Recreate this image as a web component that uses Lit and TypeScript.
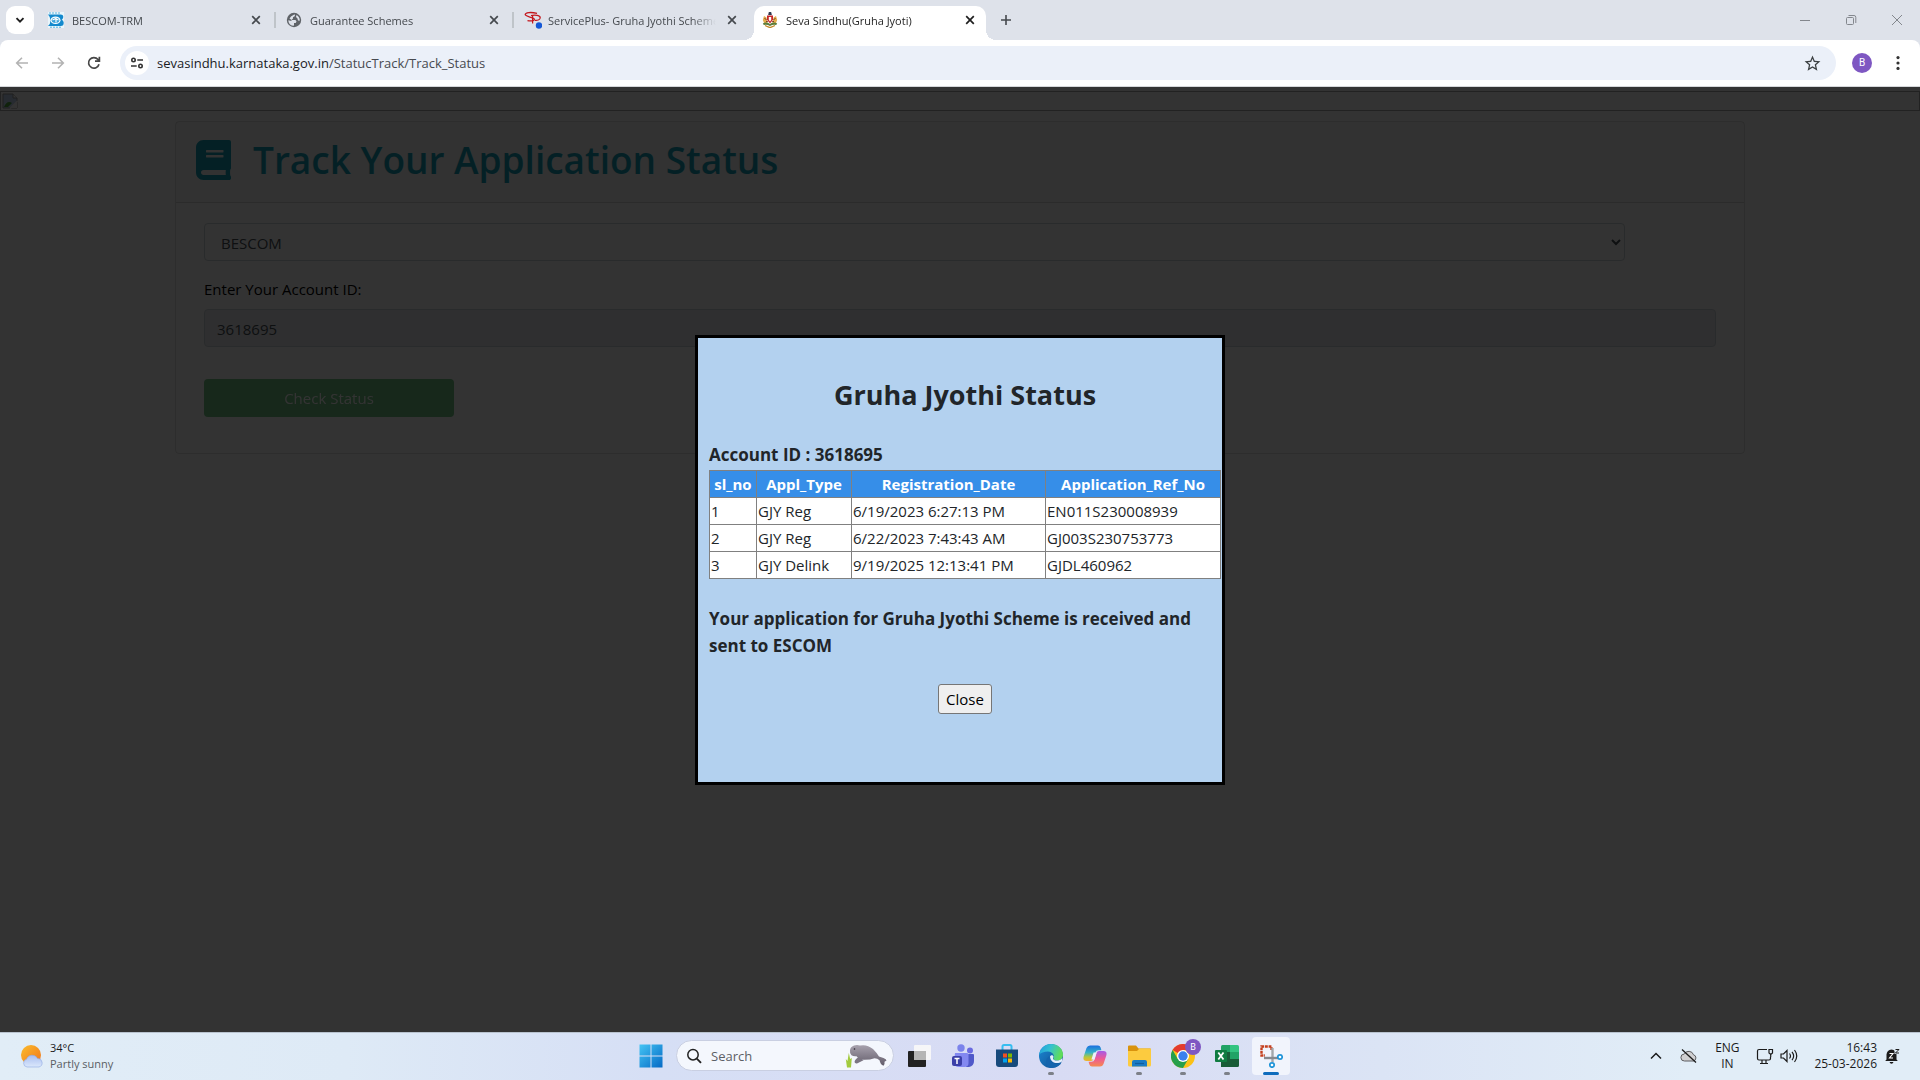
import { LitElement, html, css, svg } from "lit";
import { customElement } from "lit/decorators.js";
import { classMap } from "lit/directives/class-map.js";

const closeIcon = html`<svg viewBox="0 0 16 16" width="16" height="16"><path d="M4.2 4.2l7.6 7.6M11.8 4.2l-7.6 7.6" stroke="currentColor" stroke-width="1.7" fill="none"/></svg>`;

const bescomIcon = html`<svg viewBox="0 0 16 16" width="16" height="16">
  <rect width="16" height="16" fill="#e8f5fb"/>
  <path d="M0 2.500h12.500q3.200 0 2.700 3-.5 1.700-1.500 2.300 1.700.7 2 2.700.2 3.500-3 3.500H0q2.500-2 2.500-5.500T0 2.500z" fill="#1389cd"/>
  <path d="M1 1h12M2 15.200h11" stroke="#58b4e0" stroke-dasharray="2 1"/>
  <ellipse cx="7.500" cy="8.300" rx="5" ry="3.800" fill="#fff"/>
  <ellipse cx="7.500" cy="8.300" rx="3.800" ry="2.600" fill="#3aa4dc"/>
  <path d="M4.500 8l3.500-1.500v4M8 7l2.500 1" stroke="#fff" stroke-width="1.200" fill="none"/>
</svg>`;

const globeIcon = html`<svg viewBox="0 0 16 16" width="16" height="16">
  <circle cx="8" cy="8" r="7.200" fill="#5f6368"/>
  <path d="M8.600 2.300L9 4 7 5.200v1.300L5.500 8h4l1 1.500-.8 1.500H8v2.500l-1 .3C4.200 13.300 2.300 11 2.300 8.200l3.200.8V8L3.500 6.500 5 4.500z M10.500 2.900L10 5l1.500 1.500.5 2 1.700.2c.3-2.500-1-4.700-3.200-5.800z" fill="#dee2ea"/>
</svg>`;

const servicePlusIcon = html`<svg viewBox="0 0 18 18" width="18" height="18">
  <path d="M13 2.300C7 .9 1.200 1.300 1.200 3.600c0 2.300 9 2.500 9.200 4.700.1 1.600-3.400 2-6.900 1.400" fill="none" stroke="#c4161c" stroke-width="1.300"/>
  <path d="M7 4.600c4-.9 9.600-.3 9.200 2.400-.3 2-3.200 2.600-5.200 2.300M8.600 5v7.600" fill="none" stroke="#c4161c" stroke-width="1.200"/>
  <circle cx="15" cy="14.500" r="3.200" fill="#1558d6"/>
</svg>`;

const emblemIcon = html`<svg viewBox="0 0 16 16" width="16" height="16">
  <path d="M6.800 0h2.400l.6 3H6.200z" fill="#30384f"/>
  <path d="M2 4l2.500 1.500L5.500 11H2L.8 8z M14 4l-2.500 1.500L10.500 11H14l1.200-3z" fill="#e3ad4c"/>
  <path d="M5 3.500h6v4.200L8 11.500 5 7.700z" fill="#c62828"/>
  <path d="M6.800 5h2.400v3L8 9.500 6.800 8z" fill="#fff"/>
  <path d="M.8 11.500q3.500-2 7.200.5 3.700-2.500 7.200-.5l-1 1.600q-3-1-6.200 1-3.200-2-6.200-1z" fill="#5c7d3a"/>
  <path d="M3 13.500l5 2.200 5-2.200" stroke="#c48a2a" stroke-width="1.300" fill="none"/>
  <path d="M2.500 6.500l2 1M13.500 6.500l-2 1M4 9.500h1.800M10.200 9.500H12" stroke="#7a3b22"/>
</svg>`;

interface Tab {
  title: string;
  icon: unknown;
  active?: boolean;
}

const tabs: Tab[] = [
  { title: "BESCOM-TRM", icon: bescomIcon },
  { title: "Guarantee Schemes", icon: globeIcon },
  { title: "ServicePlus- Gruha Jyothi Scheme", icon: servicePlusIcon },
  { title: "Seva Sindhu(Gruha Jyoti)", icon: emblemIcon, active: true },
];

@customElement("browser-chrome")
export class BrowserChrome extends LitElement {
  static styles = css`
    :host {
      display: block;
      background: #dee2ea;
      color: #45494e;
      font-size: 11px;
    }
    button {
      font: inherit;
      color: inherit;
      background: none;
      border: 0;
      padding: 0;
      display: flex;
      align-items: center;
      justify-content: center;
    }
    svg { display: block; flex: none; }
    .strip {
      display: flex;
      align-items: center;
      height: 40px;
    }
    .search-tabs {
      width: 28px;
      height: 28px;
      margin: 0 6px;
      border-radius: 9px;
      background: #fff;
      color: #1f1f1f;
    }
    .tab {
      position: relative;
      display: flex;
      align-items: center;
      box-sizing: border-box;
      width: 232px;
      height: 34px;
      margin: 6px 6px 0 0;
      padding: 0 8px 6px;
      gap: 8px;
    }
    .tab .icon { width: 16px; }
    .tab .title {
      flex: 1;
      min-width: 0;
      justify-content: flex-start;
      overflow: hidden;
      white-space: nowrap;
      mask-image: linear-gradient(90deg, #000 calc(100% - 24px), transparent);
    }
    .tab.divided::after {
      content: "";
      position: absolute;
      right: -4px;
      top: 6px;
      width: 2px;
      height: 16px;
      background: #bfc4c9;
    }
    .tab.active {
      background: #fff;
      color: #1f1f1f;
      border-radius: 10px 10px 0 0;
    }
    .tab.active::before,
    .tab.active::after {
      content: "";
      position: absolute;
      bottom: 0;
      width: 10px;
      height: 10px;
    }
    .tab.active::before {
      left: -10px;
      background: radial-gradient(circle at 0 0, transparent 10px, #fff 10px);
    }
    .tab.active::after {
      right: -10px;
      background: radial-gradient(circle at 100% 0, transparent 10px, #fff 10px);
    }
    .new-tab { width: 28px; height: 28px; }
    .window {
      display: flex;
      margin-left: auto;
      color: #83878d;
    }
    .window button { width: 46px; height: 40px; }
    .toolbar {
      display: flex;
      align-items: center;
      height: 46px;
      padding: 0 2px 0 4px;
      background: #fff;
      border-radius: 8px 8px 0 0;
      border-bottom: 1px solid #d5d7da;
    }
    .nav { width: 36px; height: 34px; color: #474747; }
    .nav:disabled { color: #b3b3b3; }
    .address {
      flex: 1;
      display: flex;
      align-items: center;
      height: 34px;
      margin: 0 10px 0 8px;
      padding: 0 14px 0 5px;
      border-radius: 17px;
      background: #ebf0f9;
    }
    .site {
      width: 24px;
      height: 24px;
      border-radius: 50%;
      background: #fff;
      color: #333;
    }
    .url {
      flex: 1;
      margin-left: 8px;
      font-size: 13px;
      color: #474a50;
    }
    .url span { color: #1a1b1e; }
    .profile { width: 32px; height: 32px; }
    .avatar {
      width: 20px;
      height: 20px;
      border-radius: 50%;
      background: #7e57c2;
      color: #fff;
      font: 10px/20px Roboto, sans-serif;
      text-align: center;
    }
    .menu { width: 40px; height: 32px; color: #333; }
  `;

  private tab(t: Tab, i: number) {
    const divided = !t.active && !tabs[i + 1]?.active;
    return html`<div class=${classMap({ tab: true, active: !!t.active, divided })}>
      <span class="icon">${t.icon}</span>
      <button class="title">${t.title}</button>
      <button aria-label="Close tab">${closeIcon}</button>
    </div>`;
  }

  render() {
    return html`
      <div class="strip">
        <button class="search-tabs" aria-label="Search tabs">
          <svg viewBox="0 0 16 16" width="16" height="16"><path d="M4.500 6.200L8 9.700l3.500-3.500" fill="none" stroke="currentColor" stroke-width="1.900"/></svg>
        </button>
        ${tabs.map((t, i) => this.tab(t, i))}
        <button class="new-tab" aria-label="New tab">
          <svg viewBox="0 0 16 16" width="16" height="16"><path d="M8 3v10M3 8h10" stroke="currentColor" stroke-width="1.600"/></svg>
        </button>
        <div class="window">
          <button aria-label="Minimise"><svg viewBox="0 0 12 12" width="12" height="12"><path d="M1 6.500h10" stroke="currentColor"/></svg></button>
          <button aria-label="Restore"><svg viewBox="0 0 12 12" width="12" height="12"><rect x="1.500" y="3.500" width="7" height="7" rx="1" fill="none" stroke="currentColor"/><path d="M3.500 1.500h5.500a1.800 1.800 0 0 1 1.800 1.800V9" fill="none" stroke="currentColor"/></svg></button>
          <button aria-label="Close"><svg viewBox="0 0 12 12" width="12" height="12"><path d="M1 1l10 10M11 1L1 11" stroke="currentColor"/></svg></button>
        </div>
      </div>
      <div class="toolbar">
        <button class="nav" disabled aria-label="Back"><svg viewBox="0 0 16 16" width="16" height="16"><path d="M14 8H3M8 2.700L2.700 8 8 13.300" fill="none" stroke="currentColor" stroke-width="1.600"/></svg></button>
        <button class="nav" disabled aria-label="Forward"><svg viewBox="0 0 16 16" width="16" height="16"><path d="M2 8h11M8 2.700L13.300 8 8 13.300" fill="none" stroke="currentColor" stroke-width="1.600"/></svg></button>
        <button class="nav" aria-label="Reload"><svg viewBox="0 0 16 16" width="16" height="16"><path d="M13 9.200A5.300 5.300 0 1 1 12 4.500l1 1.200M13.400 1.800v4.400H9" fill="none" stroke="currentColor" stroke-width="1.700"/></svg></button>
        <div class="address">
          <button class="site" aria-label="Site information"><svg viewBox="0 0 16 16" width="16" height="16"><g fill="none" stroke="currentColor" stroke-width="1.600"><circle cx="4.500" cy="5" r="1.700"/><path d="M8.300 5H14M2 11h5.700"/><circle cx="11.500" cy="11" r="1.700"/></g></svg></button>
          <div class="url"><span>sevasindhu.karnataka.gov.in</span>/StatucTrack/Track_Status</div>
          <button class="star" aria-label="Bookmark this tab"><svg viewBox="0 0 24 24" width="19" height="19" fill="#3c4043"><path d="M22 9.240l-7.190-.62L12 2 9.190 8.630 2 9.240l5.460 4.730L5.820 21 12 17.270 18.180 21l-1.630-7.030L22 9.240zM12 15.400l-3.760 2.270 1-4.280-3.320-2.880 4.380-.38L12 6.100l1.710 4.040 4.380.38-3.320 2.880 1 4.280L12 15.400z"/></svg></button>
        </div>
        <button class="profile" aria-label="Profile"><span class="avatar">B</span></button>
        <button class="menu" aria-label="Menu"><svg viewBox="0 0 16 16" width="16" height="16" fill="currentColor"><circle cx="8" cy="2.600" r="1.600"/><circle cx="8" cy="8" r="1.600"/><circle cx="8" cy="13.400" r="1.600"/></svg></button>
      </div>
    `;
  }
}

const applications = [
  ["1", "GJY Reg", "6/19/2023 6:27:13 PM", "EN011S230008939"],
  ["2", "GJY Reg", "6/22/2023 7:43:43 AM", "GJ003S230753773"],
  ["3", "GJY Delink", "9/19/2025 12:13:41 PM", "GJDL460962"],
];

@customElement("status-page")
export class StatusPage extends LitElement {
  static styles = css`
    :host {
      display: block;
      position: relative;
      overflow: hidden;
      background: #fff;
      color: #212529;
      font-size: 15px;
      line-height: 24px;
    }
    .banner {
      box-sizing: border-box;
      height: 20px;
      margin-top: 4px;
      padding: 1px;
      border: 1px solid #a9a9a9;
    }
    .banner svg { display: block; }
    .card {
      box-sizing: border-box;
      width: calc(100% * 10 / 12 - 30px);
      margin: 10px auto 0;
      border: 1px solid rgba(0, 0, 0, 0.125);
      border-radius: 4px;
    }
    .head {
      display: flex;
      align-items: center;
      gap: 22px;
      padding: 14px 20px 18px;
      background: rgba(0, 0, 0, 0.03);
      border-bottom: 1px solid rgba(0, 0, 0, 0.125);
      color: #17a2b8;
    }
    .head h1 {
      margin: 0;
      font-size: 37px;
      line-height: 48px;
      font-weight: 600;
    }
    .body { padding: 20px 28px 36px; }
    select,
    input {
      display: block;
      box-sizing: border-box;
      width: 100%;
      height: 38px;
      padding: 7px 12px 5px;
      border: 1px solid #ced4da;
      border-radius: 4px;
      background: #fff;
      color: #495057;
      font: inherit;
    }
    select { width: 94%; }
    input:disabled { background: #e9ecef; }
    label { display: block; margin: 16px 0 8px; color: #000; }
    .check {
      display: block;
      width: 250px;
      height: 38px;
      margin-top: 32px;
      border: 0;
      border-radius: 4px;
      background: #28a745;
      color: #fff;
      font: inherit;
      opacity: 0.65;
    }
    .overlay {
      position: absolute;
      inset: 0;
      display: flex;
      align-items: center;
      justify-content: center;
      background: rgba(0, 0, 0, 0.8);
    }
    .modal {
      box-sizing: border-box;
      width: 530px;
      min-height: 450px;
      padding: 40px 1px 40px 11px;
      border: 3px solid #000;
      background: #b3d1ef;
    }
    h2 {
      margin: 0;
      text-align: center;
      font-size: 27px;
      line-height: 34px;
      font-weight: 700;
    }
    .strong {
      margin: 0;
      font-size: 17px;
      line-height: 27px;
      font-weight: 700;
    }
    .account { margin-top: 29px; padding-bottom: 2px; }
    table {
      width: 100%;
      table-layout: fixed;
      border-collapse: collapse;
      background: #fff;
    }
    th,
    td {
      box-sizing: border-box;
      height: 27px;
      padding: 1px;
      border: 1px solid #808080;
      text-align: left;
      white-space: nowrap;
    }
    th {
      background: #368ee8;
      color: #fff;
      font-weight: 700;
      text-align: center;
    }
    .c1 { width: 47px; }
    .c2 { width: 95px; }
    .c3 { width: 194px; }
    .message { margin-top: 26px; }
    .close {
      display: block;
      height: 30px;
      margin: 25px auto 0;
      padding: 1px 7px;
      border: 1px solid #767676;
      border-radius: 3px;
      background: #efefef;
      color: #000;
      font: inherit;
    }
  `;

  render() {
    return html`
      <div class="banner">
        <svg viewBox="0 0 16 16" width="16" height="16"><path d="M1 1h10l4 4v10H1z" fill="#c4d8f5" stroke="#9a9a9a"/><path d="M11 1v4h4" fill="#fff" stroke="#9a9a9a"/><path d="M2 14q3-7 8-4l-4 4z" fill="#4fa83d"/><path d="M9 15l6-6v6z" fill="#fff"/><path d="M8 15.500L15.500 8" stroke="#fff" stroke-width="1.500"/></svg>
      </div>
      <main class="card">
        <div class="head">
          <svg viewBox="0 0 448 512" width="35" height="40" fill="currentColor"><path d="M448 360V24c0-13.300-10.700-24-24-24H96C43 0 0 43 0 96v320c0 53 43 96 96 96h328c13.300 0 24-10.700 24-24v-16c0-7.500-3.500-14.300-8.900-18.700-4.200-15.400-4.200-59.300 0-74.700 5.400-4.300 8.900-11.100 8.900-18.600zM128 134c0-3.300 2.700-6 6-6h212c3.300 0 6 2.700 6 6v20c0 3.300-2.700 6-6 6H134c-3.300 0-6-2.700-6-6v-20zm0 64c0-3.300 2.700-6 6-6h212c3.300 0 6 2.700 6 6v20c0 3.300-2.700 6-6 6H134c-3.300 0-6-2.700-6-6v-20zm253.400 250H96c-17.700 0-32-14.300-32-32 0-17.600 14.400-32 32-32h285.400c-1.900 17.100-1.900 46.900 0 64z"/></svg>
          <h1>Track Your Application Status</h1>
        </div>
        <div class="body">
          <select aria-label="Company"><option>BESCOM</option></select>
          <label for="account">Enter Your Account ID:</label>
          <input id="account" value="3618695" disabled />
          <button class="check" disabled>Check Status</button>
        </div>
      </main>
      <div class="overlay">
        <section class="modal" role="dialog" aria-labelledby="title">
          <h2 id="title">Gruha Jyothi Status</h2>
          <p class="strong account">Account ID : 3618695</p>
          <table>
            <thead>
              <tr>
                <th class="c1">sl_no</th>
                <th class="c2">Appl_Type</th>
                <th class="c3">Registration_Date</th>
                <th>Application_Ref_No</th>
              </tr>
            </thead>
            <tbody>
              ${applications.map((row) => html`<tr>${row.map((cell) => html`<td>${cell}</td>`)}</tr>`)}
            </tbody>
          </table>
          <p class="strong message">Your application for Gruha Jyothi Scheme is received and sent to ESCOM</p>
          <button class="close">Close</button>
        </section>
      </div>
    `;
  }
}

interface App {
  name: string;
  icon: unknown;
  running?: boolean;
  active?: boolean;
  badge?: string;
}

const glyph = (body: unknown) => html`<svg viewBox="0 0 24 24" width="24" height="24">${body}</svg>`;

const apps: App[] = [
  {
    name: "Task view",
    icon: glyph(svg`<rect x="7" y="1" width="17" height="15" rx="1" fill="#f6f6f8"/><rect x="1" y="7" width="18" height="16" rx="1" fill="#222"/><path d="M7 7h12v9H7z" fill="#b5b5b5"/>`),
  },
  {
    name: "Teams",
    icon: glyph(svg`<circle cx="19" cy="6.500" r="3" fill="#6a6ae0"/><circle cx="10" cy="4" r="3.700" fill="#7b83eb"/><path d="M15 10h7q1 0 1 1v6q0 5-5 6h-3z" fill="#5059c9"/><path d="M4 9h12q1.500 0 1.500 1.500V19q0 4-4 4H8q-5 0-5-5z" fill="#8388f0"/><rect x="1" y="12" width="10" height="10" rx="2" fill="#3b3fa8"/><path d="M3.500 14.500h5M6 14.500V20" stroke="#fff" stroke-width="1.500"/>`),
  },
  {
    name: "Microsoft Store",
    icon: glyph(svg`<path d="M7.500 6V2.500q0-1.500 1.500-1.500h6q1.500 0 1.500 1.500V6" fill="none" stroke="#37bdf0" stroke-width="2"/><path d="M1 5.500h22V20q0 3-3 3H4q-3 0-3-3z" fill="#174a7c"/><path d="M8 9.500h4v4H8z" fill="#f25022"/><path d="M13 9.500h4v4h-4z" fill="#7fba00"/><path d="M8 14.500h4v4H8z" fill="#00a4ef"/><path d="M13 14.500h4v4h-4z" fill="#ffb900"/>`),
  },
  {
    name: "Edge",
    running: true,
    icon: glyph(svg`<defs><linearGradient id="ea" x1="0" y1="0" x2="1" y2=".3"><stop offset="0" stop-color="#1f9be0"/><stop offset=".5" stop-color="#35c1d0"/><stop offset="1" stop-color="#5fdc5a"/></linearGradient><linearGradient id="eb" x1="0" y1="0" x2="1" y2="1"><stop offset="0" stop-color="#1b8ad6"/><stop offset="1" stop-color="#114a8b"/></linearGradient></defs><circle cx="12" cy="12" r="12" fill="url(#eb)"/><path d="M0 11C1 4.500 6 0 12 0c7 0 12 5 12 10.500 0 4-3 6-6 6-2.500 0-4.200-1-3.500-2.200C16 11.500 13.500 7.500 9 7.500 5 7.500 1.500 9 0 11z" fill="url(#ea)"/><path d="M10.500 12c-1 4.500 3 8 7.500 7.500 2-.2 3.500-1 4.500-1.500l-1 2.200C19 23 15 24 12 24c-5-.5-7.500-8-1.500-12z" fill="#1464ad"/><path d="M11 12.500c1-2 3.500-1.500 3.500.3 0 1-1 1.500-.2 2.500 1.500 2 6.500 1.700 9-1.300l-.4 3.500c-4 3-11.500 2-11.900-5z" fill="#e4eefb"/>`),
  },
  {
    name: "Copilot",
    icon: glyph(svg`<defs><linearGradient id="ca" x1="0" y1="0" x2="0" y2="1"><stop offset="0" stop-color="#1b6fe0"/><stop offset=".45" stop-color="#35b2c8"/><stop offset=".75" stop-color="#b6c83c"/><stop offset="1" stop-color="#f5b02e"/></linearGradient><linearGradient id="cb" x1="0" y1="0" x2="0" y2="1"><stop offset="0" stop-color="#a65ae8"/><stop offset=".5" stop-color="#ee5a94"/><stop offset="1" stop-color="#f58a4f"/></linearGradient></defs><path d="M7 1.500h8q2 0 2.600 2l.8 2.800h-3q-2.300 0-3 2.300l-2 6.500Q9.700 17 8 17H3.500Q-.5 17 .7 12.500L3.500 4Q4.500 1.500 7 1.500z" fill="url(#ca)"/><path d="M17 22.500H9q-2 0-2.600-2l-.8-2.800h3q2.300 0 3-2.300l2-6.500Q14.300 7 16 7h4.500q4 0 2.800 4.500L20.500 20q-1 2.500-3.500 2.500z" fill="url(#cb)"/><path d="M10.600 8.500h3l-2.200 7h-3z" fill="#eef0fb"/>`),
  },
  {
    name: "File Explorer",
    running: true,
    icon: glyph(svg`<path d="M1 2.500q0-1 1-1h7l2.500 3H23q1 0 1 1V10H1z" fill="#d9930d"/><path d="M1 7h9l2.500-2.500H23q1 0 1 1V21q0 1.500-1.500 1.500h-20Q1 22.500 1 21z" fill="#fccb3f"/><path d="M5 22.500V18q0-2 2-2h11q2 0 2 2v4.500z" fill="#1a7bc4"/><path d="M8 19.500h9" stroke="#0f5d9e" stroke-width="1.200"/>`),
  },
  {
    name: "Chrome",
    running: true,
    badge: "B",
    icon: glyph(svg`<circle cx="12" cy="12" r="12" fill="#fbc116"/><path d="M12 12L1.600 6A12 12 0 0 1 22.400 6H12z" fill="#e33b2e"/><path d="M1.600 6A12 12 0 0 0 12 24l5.200-9L12 12 6.800 15z" fill="#269f4b"/><circle cx="12" cy="12" r="6" fill="#fff"/><circle cx="12" cy="12" r="4.700" fill="#3a80ee"/>`),
  },
  {
    name: "Excel",
    running: true,
    icon: glyph(svg`<path d="M6 2.500Q6 1 7.500 1H15v22H7.500Q6 23 6 21.500z" fill="#21a366"/><path d="M15 1h7.500Q24 1 24 2.500V8h-9z" fill="#33c481"/><path d="M6 8h9v7H6zM15 15h9v6.500q0 1.500-1.500 1.500H6v-8z" fill="#185c37"/><path d="M15 8h9v7h-9z" fill="#21a366"/><rect y="6" width="12" height="12" rx="1" fill="#107c41"/><path d="M3.300 8.500l5.200 7M8.500 8.500l-5.200 7" stroke="#fff" stroke-width="1.800"/>`),
  },
  {
    name: "Snipping Tool",
    active: true,
    icon: glyph(svg`<path d="M12.500 6V2.500H2.500v9H6" fill="none" stroke="#c43e1c" stroke-width="2.400" stroke-dasharray="2.800 .8"/><path d="M13.500 4v14" stroke="#a2a6ab" stroke-width="2.400"/><path d="M5 14h14.500" stroke="#85898f" stroke-width="2.400"/><circle cx="21" cy="13" r="2.200" fill="#fff" stroke="#1d93d8" stroke-width="1.700"/><circle cx="13" cy="21" r="2.200" fill="#fff" stroke="#1d93d8" stroke-width="1.700"/>`),
  },
];

@customElement("task-bar")
export class TaskBar extends LitElement {
  static styles = css`
    :host {
      display: grid;
      grid-template-columns: 1fr auto 1fr;
      align-items: center;
      box-sizing: border-box;
      height: 48px;
      padding-bottom: 2px;
      border-top: 1px solid #b9c3cf;
      background: linear-gradient(90deg, #e1edf7 0, #deeaf6 18%, #d6dff5 34%, #d8dbf4 55%, #dbe4f5 72%, #e1edf7 88%);
      color: #1b1b1b;
      font-size: 11px;
      line-height: 16px;
    }
    svg { display: block; flex: none; }
    button {
      display: flex;
      align-items: center;
      justify-content: center;
      padding: 0;
      border: 0;
      background: none;
      color: inherit;
      font: inherit;
    }
    .weather {
      justify-self: start;
      gap: 6px;
      margin-left: 20px;
      text-align: left;
    }
    .weather span { display: block; }
    .weather .sky { color: #5a5e64; }
    .apps { display: flex; align-items: center; padding-left: 2px; }
    .start { width: 44px; height: 38px; }
    .search {
      display: flex;
      align-items: center;
      box-sizing: border-box;
      width: 218px;
      height: 31px;
      margin: 0 3px;
      padding: 0 6px 0 9px;
      gap: 9px;
      border: 1px solid #c9cfe2;
      border-radius: 16px;
      background: #f4f7fd;
    }
    .search input {
      flex: 1;
      min-width: 0;
      padding: 0;
      border: 0;
      outline: 0;
      background: none;
      font: inherit;
      font-size: 13px;
    }
    .search input::placeholder { color: #5c5f66; }
    .app {
      position: relative;
      width: 38px;
      height: 38px;
      margin: 0 3px;
      border-radius: 4px;
    }
    .app.active { background: #f1f4fc; }
    .app.running::after,
    .app.active::after {
      content: "";
      position: absolute;
      bottom: 0;
      width: 6px;
      height: 3px;
      border-radius: 2px;
      background: #7d8088;
    }
    .app.active::after { width: 16px; background: #0f6cbd; }
    .badge {
      position: absolute;
      top: 2px;
      right: 1px;
      width: 16px;
      height: 16px;
      border-radius: 50%;
      background: #7e57c2;
      color: #fff;
      font: 9px/16px Roboto, sans-serif;
    }
    .tray {
      display: flex;
      align-items: center;
      justify-self: end;
      padding-right: 20px;
      font-size: 12px;
    }
    .lang { width: 26px; margin: 0 16px; }
    .devices { gap: 6px; }
    .clock {
      margin: 0 7px 0 16px;
      text-align: right;
    }
    .clock span { display: block; }
    .hide { margin-right: 16px; }
  `;

  render() {
    return html`
      <button class="weather">
        <svg viewBox="0 0 24 24" width="24" height="24"><defs><linearGradient id="sun" x1="0" y1="0" x2="1" y2="1"><stop offset="0" stop-color="#fbbd2b"/><stop offset="1" stop-color="#f0731d"/></linearGradient><linearGradient id="cl" x1="0" y1="0" x2="0" y2="1"><stop offset="0" stop-color="#a8bdf0"/><stop offset="1" stop-color="#dbe8fb"/></linearGradient></defs><circle cx="11" cy="11" r="10" fill="url(#sun)"/><path d="M7 23a4 4 0 0 1-.5-7.800 6 6 0 0 1 11-.8A4.400 4.400 0 0 1 19 23z" fill="url(#cl)" stroke="#8ea8e2" stroke-width=".6"/></svg>
        <span><span>34°C</span><span class="sky">Partly sunny</span></span>
      </button>
      <div class="apps">
        <button class="start" aria-label="Start">
          <svg viewBox="0 0 24 24" width="24" height="24"><defs><linearGradient id="win" gradientUnits="userSpaceOnUse" x1="0" y1="0" x2="24" y2="24"><stop offset="0" stop-color="#45c6f5"/><stop offset="1" stop-color="#0468c4"/></linearGradient></defs><path d="M.5 .5h11v11H.5zM12.500 .5h11v11h-11zM.5 12.500h11v11H.5zM12.500 12.500h11v11h-11z" fill="url(#win)"/></svg>
        </button>
        <label class="search">
          <svg viewBox="0 0 16 16" width="16" height="16"><circle cx="7" cy="6.700" r="5.200" fill="none" stroke="#222" stroke-width="1.500"/><path d="M10.800 10.600L15 14.800" stroke="#222" stroke-width="1.900"/></svg>
          <input placeholder="Search" aria-label="Search" />
          <svg viewBox="0 0 42 24" width="42" height="24"><defs><linearGradient id="mt" x1="0" y1="0" x2="0" y2="1"><stop offset="0" stop-color="#a8a2ae"/><stop offset="1" stop-color="#625c6a"/></linearGradient></defs><path d="M2 23.500L.8 15l1.700 2L3.800 9l1.400 6 1.600-1-.8 9.500z" fill="#a2cb3f"/><path d="M14 13q-4 2-4.500 5 .5 2 3 1.300l6-3z" fill="#7b7583"/><path d="M5 6.500Q5 3 9 1.500q3-1 6 0 7-1.500 13 3.500 4 4 6 7.500l4.500 1.500q3 1 3 2.500l-2 1.200q.5 3-1 4-3-1-4-5.500-2-2-5-2-4 1.500-10 1.500-5 .5-8-3.500-3 .5-5-1-2-1.500-1.500-4.700z" fill="url(#mt)"/><circle cx="9.500" cy="5" r=".8" fill="#2b2730"/></svg>
        </label>
        ${apps.map(
          (a) => html`<button aria-label=${a.name} class=${classMap({ app: true, running: !!a.running, active: !!a.active })}>
            ${a.icon}${a.badge ? html`<span class="badge">${a.badge}</span>` : ""}
          </button>`,
        )}
      </div>
      <div class="tray">
        <button class="hide" aria-label="Show hidden icons"><svg viewBox="0 0 16 16" width="16" height="16"><path d="M3 10.500l5-5 5 5" fill="none" stroke="currentColor" stroke-width="1.500"/></svg></button>
        <button aria-label="OneDrive"><svg viewBox="0 0 18 16" width="18" height="16"><path d="M4.500 13A3.500 3.500 0 0 1 4.300 6a5 5 0 0 1 9.200.8A3.200 3.200 0 0 1 13.500 13z" fill="#d0d0d2" stroke="#5d5d60"/><path d="M2 1.500l14 13" stroke="#1b1b1b" stroke-width="1.300"/></svg></button>
        <button class="lang">ENG<br />IN</button>
        <button class="devices" aria-label="Network and volume">
          <svg viewBox="0 0 18 18" width="18" height="18"><path d="M11 2.500H3q-1.500 0-1.500 1.500v7.500q0 1.500 1.500 1.500h10q1.500 0 1.500-1.500V10M6 13v3.500M10 13v3.500M4 16.500h8M13 2.500h3.500V6l-1.700 1.500L13 6z M14.700 7.500V10" fill="none" stroke="currentColor" stroke-width="1.200"/></svg>
          <svg viewBox="0 0 18 16" width="18" height="16"><path d="M1 6v4h2.500L7 13.500v-11L3.500 6zM9.500 5.500q2 2.500 0 5M12 3.800q3.300 4.200 0 8.400M14.500 2q4.500 6 0 12" fill="none" stroke="currentColor" stroke-width="1.200"/></svg>
        </button>
        <button class="clock"><span><span>16:43</span><span>25-03-2026</span></span></button>
        <button aria-label="Notifications"><svg viewBox="0 0 16 16" width="16" height="16"><path d="M2.500 11.500V6.500Q3 2 7.500 1.500q4.500.5 5 5v5l1.300 1.500H1.200zM5.500 14h4q-.5 1.800-2 1.800T5.500 14z" fill="#1b1b1b"/><path d="M5.500 5.500h3.500L5.500 10H9" fill="none" stroke="#fff" stroke-width="1.100"/><path d="M10.500 0h5.500v6h-5.500z" fill="#e1edf7"/><path d="M11.500 1.500H15L11.500 5H15" fill="none" stroke="#1b1b1b"/></svg></button>
      </div>
    `;
  }
}

@customElement("app-root")
export class AppRoot extends LitElement {
  static styles = css`
    :host {
      display: flex;
      flex-direction: column;
      min-height: 100vh;
      font-family: "Open Sans", "Noto Sans", sans-serif;
    }
    .page { flex: 1; }
  `;

  render() {
    return html`
      <browser-chrome></browser-chrome>
      <status-page class="page"></status-page>
      <task-bar></task-bar>
    `;
  }
}
